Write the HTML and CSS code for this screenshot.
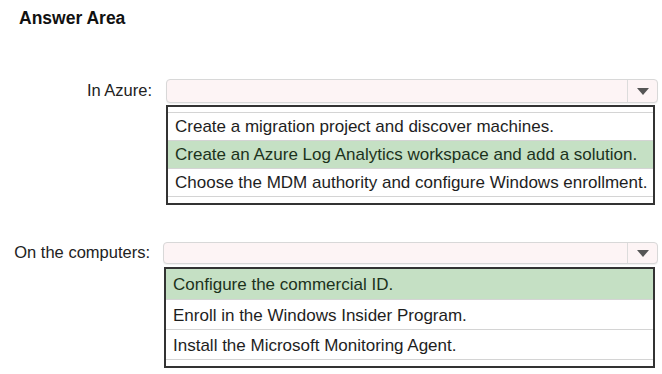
FILE: index.html
```html
<!DOCTYPE html>
<html>
<head>
<meta charset="utf-8">
<link rel="stylesheet" href="styles.css">
</head>
<body>
<div class="page">
  <h1 class="title">Answer Area</h1>

  <div class="question q-azure">
    <div class="label">In Azure:</div>
    <div class="field">
      <div class="select">
        <div class="select-value"></div>
        <div class="select-btn">
          <svg width="12" height="7" viewBox="0 0 12 7"><path d="M0 0H12L6 7Z" fill="#555"/></svg>
        </div>
      </div>
      <div class="options options-top">
        <div class="option">Create a migration project and discover machines.</div>
        <div class="option selected">Create an Azure Log Analytics workspace and add a solution.</div>
        <div class="option">Choose the MDM authority and configure Windows enrollment.</div>
      </div>
    </div>
  </div>

  <div class="question q-computers">
    <div class="label">On the computers:</div>
    <div class="field">
      <div class="select">
        <div class="select-value"></div>
        <div class="select-btn">
          <svg width="12" height="7" viewBox="0 0 12 7"><path d="M0 0H12L6 7Z" fill="#555"/></svg>
        </div>
      </div>
      <div class="options options-flush">
        <div class="option selected">Configure the commercial ID.</div>
        <div class="option">Enroll in the Windows Insider Program.</div>
        <div class="option">Install the Microsoft Monitoring Agent.</div>
      </div>
    </div>
  </div>
</div>
</body>
</html>
```

FILE: styles.css
```css
html, body {
  margin: 0;
  padding: 0;
  background: #ffffff;
}

.page {
  font-family: "Liberation Sans", Arial, sans-serif;
  color: #222;
  padding: 8px 4px 0 0;
  display: flex;
  flex-direction: column;
}

.title {
  margin: 0 0 0 19px;
  font-size: 17.5px;
  font-weight: bold;
  line-height: 21px;
  color: #111;
}

.question {
  display: grid;
  grid-template-columns: 152px 1fr;
  column-gap: 14px;
  align-items: start;
}

.q-azure {
  margin-top: 50px;
}

.q-computers {
  margin-top: 37px;
  grid-template-columns: 150px 1fr;
  column-gap: 13px;
}

.label {
  text-align: right;
  font-size: 16.5px;
  line-height: 23px;
  color: #222;
}

.q-computers .label {
  line-height: 21px;
}

.field {
  display: flex;
  flex-direction: column;
  gap: 2px;
}

.select {
  display: flex;
  height: 24px;
  box-sizing: border-box;
  border: 1px solid #d8d8d8;
  border-radius: 4px;
  background: #fdf4f5;
  box-shadow: 0 1px 1px rgba(0,0,0,0.06);
}

.q-computers .select {
  height: 22px;
}

.select-value {
  flex: 1;
}

.select-btn {
  width: 29px;
  border-left: 1px solid #dcdcdc;
  display: flex;
  align-items: center;
  justify-content: center;
}

.options {
  border: 2px solid #333;
  margin-right: 3px;
  background: #fff;
  display: flex;
  flex-direction: column;
}

.options-top {
  padding: 5px 0 6px;
}

.options-top .option:first-child {
  border-top: 1px solid #d4d4d4;
}

.options-flush {
  padding: 0 0 6px;
  margin-top: 1px;
  margin-left: 1px;
}

.option {
  height: 27px;
  line-height: 27px;
  padding-left: 7px;
  font-size: 17px;
  color: #1e1e1e;
  border-bottom: 1px solid #d4d4d4;
  white-space: nowrap;
}

.options-flush .option {
  height: 29px;
  line-height: 31px;
}

.options-flush .option.selected {
  height: 30px;
  line-height: 32px;
}

.option.selected {
  background: #c5e0c4;
  color: #1c321c;
}
```
